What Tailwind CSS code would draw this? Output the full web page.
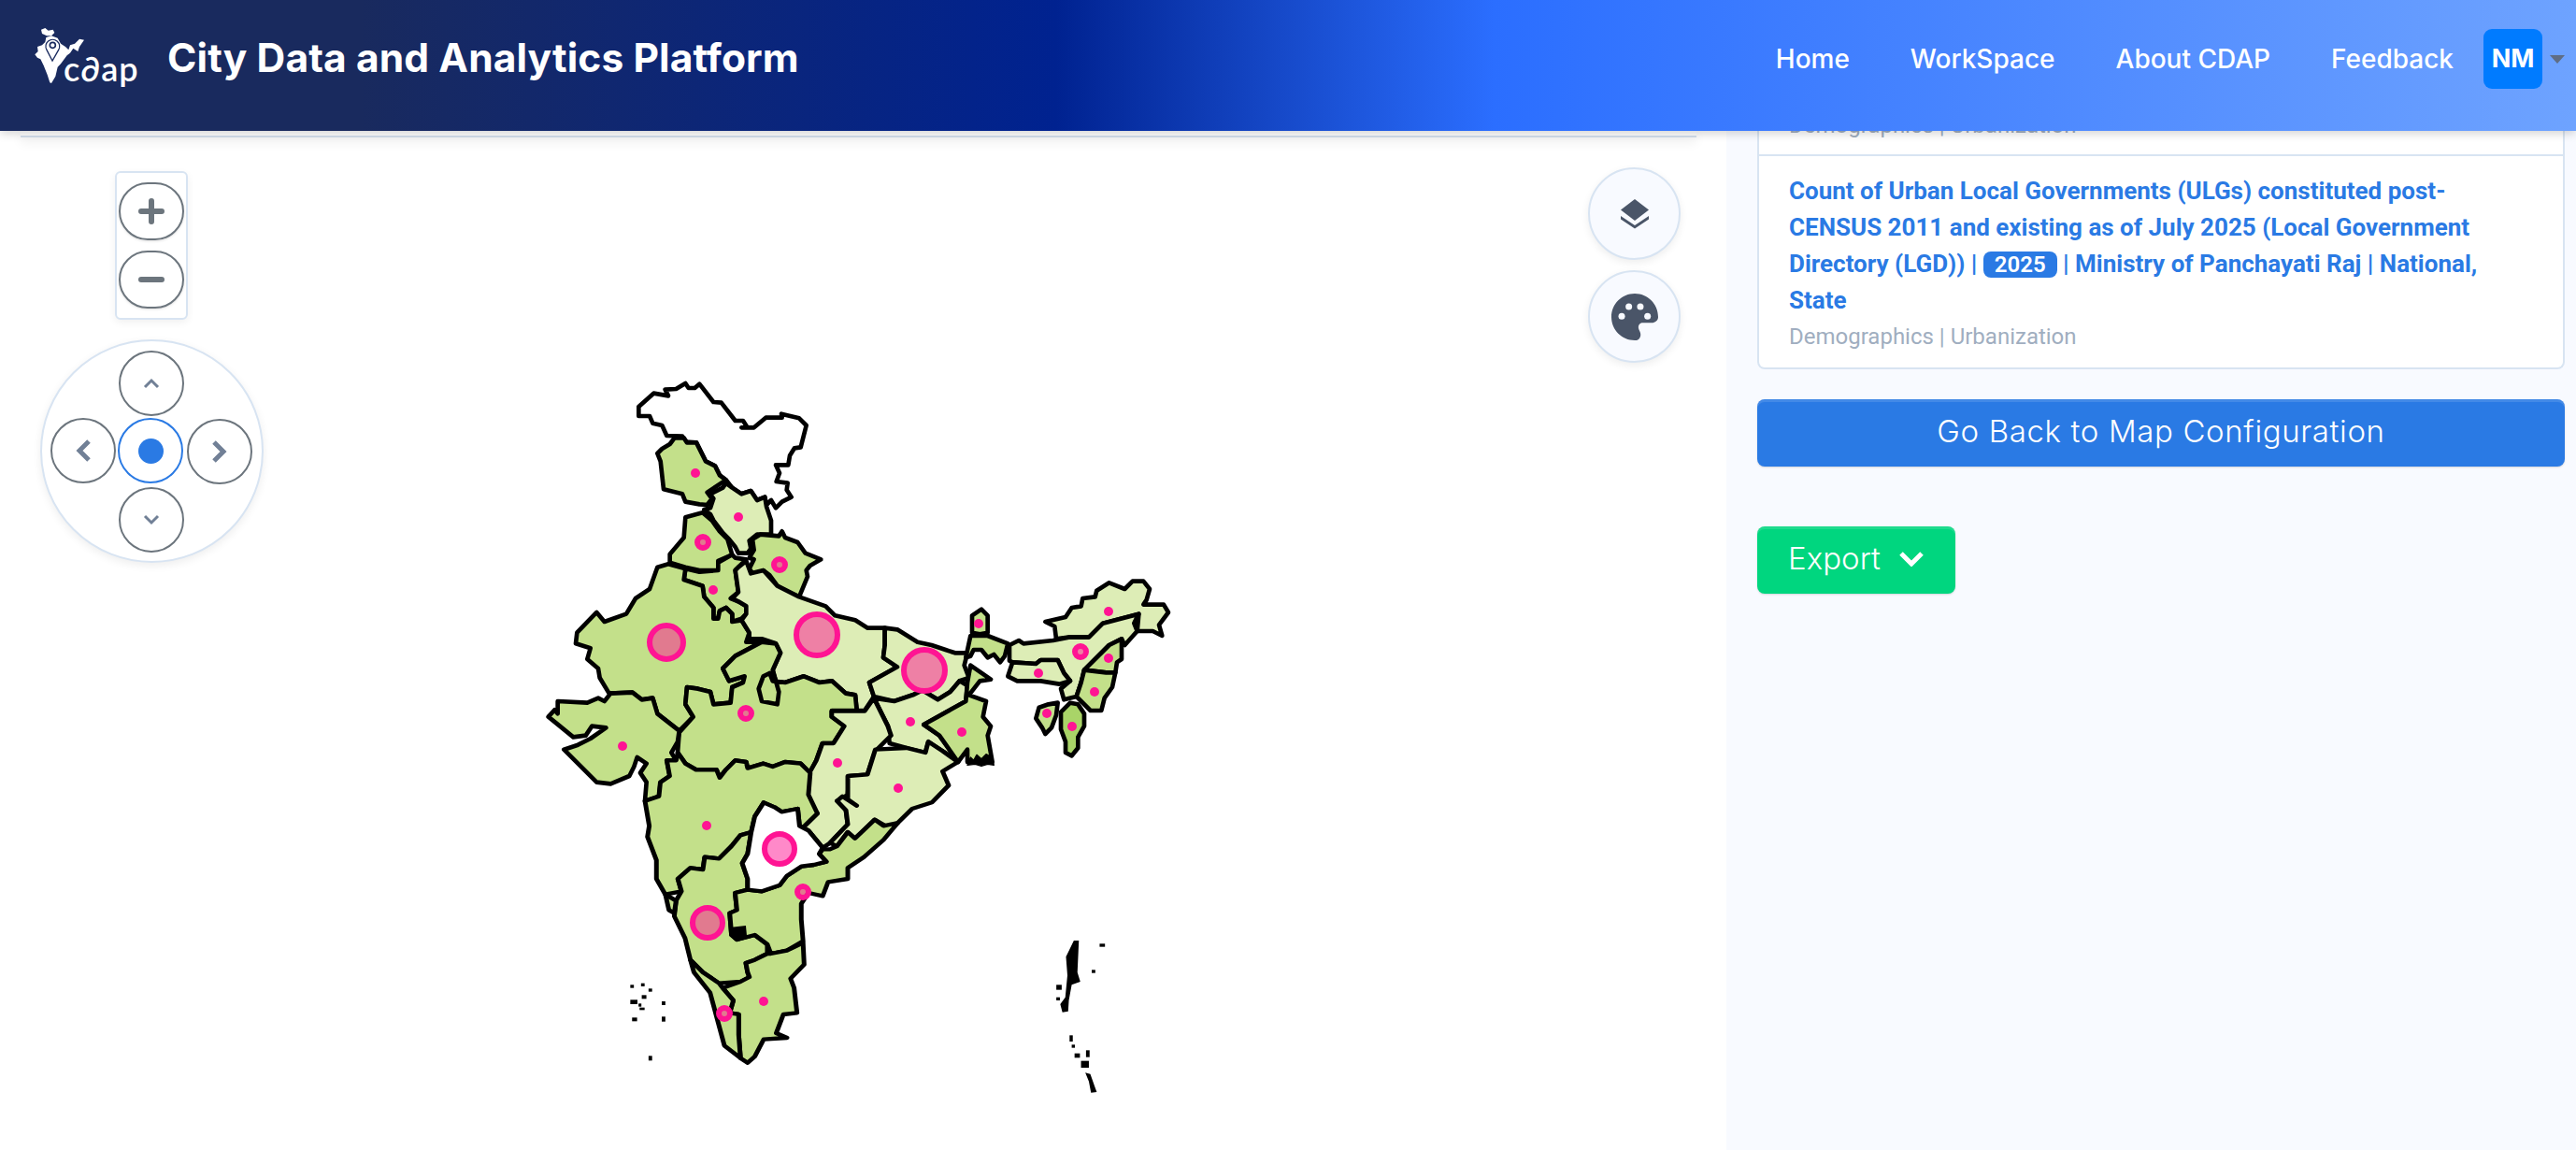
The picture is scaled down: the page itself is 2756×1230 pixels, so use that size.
<!DOCTYPE html>
<html lang="en">
<head>
  <meta charset="UTF-8" />
  <title>City Data and Analytics Platform</title>
  <script src="https://cdn.jsdelivr.net/npm/@tailwindcss/browser@4"></script>
</head>
<body class="h-screen overflow-hidden bg-white flex flex-col font-[Inter,sans-serif]">
  <!-- Top nav -->
  <header class="relative z-20 h-[140px] shrink-0 flex items-center pl-[20px] pr-[12px] text-white bg-[linear-gradient(90deg,#192a5e_0%,#192a5e_14%,#002290_41%,#2b6eff_58%,#6ea3ff_100%)] shadow-[0_2px_10px_rgba(0,0,0,0.2)]">
    <div class="relative w-[140px] h-[90px] -mt-[10px] mr-[19px] shrink-0">
      <svg class="absolute left-0 top-0 w-[140px] h-[90px]" viewBox="0 0 420 270" fill="#fff">
        <path d="M72 35L85 30 95 38 110 35 115 45 105 55 90 55 75 48z" />
        <path d="M88 60L105 55 125 62 135 80 150 90 160 100 165 85 180 80 195 65 210 68 195 90 190 105 175 95 165 110 155 118 135 145 125 155 118 185 105 207 100 205 92 180 80 150 70 130 60 125 52 115 62 105 60 90 75 85 85 75z" />
        <path d="M108 135L90 100A22 22 0 1 1 128 100z" fill="none" stroke="#192a5e" stroke-width="4" />
        <circle cx="109" cy="85" r="9" fill="#fff" stroke="#192a5e" stroke-width="5" />
      </svg>
      <span class="absolute left-[48px] top-[31px] font-[Lato] font-semibold text-[36px] leading-[44px] tracking-[1px]">c∂ap</span>
    </div>
    <h1 class="text-[42.5px] leading-[50px] font-bold tracking-[0.1px] -mt-[16px]">City Data and Analytics Platform</h1>
    <nav class="ml-auto flex items-center gap-[65px] text-[28px] font-medium -mt-[14px]">
      <a>Home</a>
      <a>WorkSpace</a>
      <a>About CDAP</a>
      <a>Feedback</a>
    </nav>
    <div class="ml-[32px] w-[63px] h-[64px] rounded-[9px] bg-[#007bff] flex items-center justify-center text-[27px] font-bold -mt-[14px]">NM</div>
    <span class="ml-[8px] w-0 h-0 border-x-[8px] border-x-transparent border-t-[9px] border-t-[#5f6d85] -mt-[14px]"></span>
  </header>

  <main class="flex-1 flex min-h-0">
    <!-- Map pane -->
    <section class="relative w-[1847px] shrink-0 bg-white">
      <div class="mx-[22px] w-[1793px] h-[7px] border-b-2 border-[#d3deeb] shadow-[0_5px_12px_rgba(0,0,0,0.08)]"></div>

      <svg class="absolute left-0 top-0 w-[1847px] h-[1090px]" viewBox="0 140 1847 1090">
        <g stroke="#000" stroke-linejoin="round">
          <!-- north and central states, traced on the 3x crop -->
          <g transform="translate(560 400) scale(.33333)" fill="#c3e08a" stroke-width="14">
            <polygon fill="#fff" points="370,135 370,105 418,62 465,70 455,50 490,48 520,30 530,45 550,45 565,32 610,90 635,92 680,150 705,150 718,170 700,172 740,172 778,140 830,140 828,128 885,142 908,165 890,235 870,238 855,262 850,292 810,292 822,318 812,345 848,350 845,372 860,395 830,410 810,430 795,405 780,420 775,395 750,405 730,375 700,385 670,365 650,340 630,325 615,295 585,280 555,220 520,218 510,200 460,198 445,165 415,158 405,135" />
            <polygon fill="#ddedb6" points="650,350 640,365 600,385 610,400 600,430 580,435 600,450 610,470 640,510 660,530 680,555 690,575 720,575 730,560 725,535 750,515 795,515 795,470 780,425 775,395 750,405 730,375 700,385 670,365" />
            <polygon points="430,255 445,240 470,225 485,205 515,205 525,220 555,220 585,280 615,295 630,325 650,340 590,380 605,400 590,420 565,418 520,410 510,385 450,370 440,280" />
            <polygon points="575,445 520,460 515,525 470,578 470,605 520,620 565,630 625,630 625,600 670,580 655,530 630,505 605,470" />
            <polygon points="735,530 760,515 820,520 830,505 840,525 880,540 905,575 955,595 920,615 908,630 912,650 885,715 850,700 815,680 790,645 770,630 740,645 725,625 740,595 725,590 740,565" />
            <polygon points="520,625 515,660 575,680 580,715 610,750 610,785 625,785 630,760 650,750 670,770 670,795 700,785 715,770 715,745 690,730 665,720 690,700 680,630 715,595 680,590 670,580 625,605 625,630 565,635" />
            <polygon points="465,610 430,620 405,690 360,720 330,770 260,795 235,765 172,830 168,865 215,880 205,915 240,945 245,975 275,1025 350,1022 380,1045 415,1040 430,1090 500,1145 545,1100 520,1060 525,1005 560,1010 600,1020 610,1060 665,1055 670,1005 705,990 710,970 660,985 640,945 680,905 765,860 715,860 725,830 700,790 670,795 670,770 650,750 630,760 625,785 610,785 610,750 580,715 575,680 515,660 520,625" />
            <polygon fill="#ddedb6" points="690,620 715,600 730,640 770,630 815,680 885,715 970,745 1000,775 1065,790 1105,815 1160,815 1160,870 1155,910 1200,940 1110,990 1125,1035 1095,1080 1070,1080 1065,1030 1035,1025 990,985 950,990 900,970 840,990 800,985 790,960 770,970 755,1010 765,1050 815,1060 820,1020 800,950 825,895 810,865 765,850 725,850 725,830 700,790 715,770 715,745 690,730 670,720 690,700 680,630" />
            <polygon fill="#ddedb6" points="1160,815 1200,820 1265,860 1310,870 1355,885 1385,895 1425,895 1415,935 1430,975 1400,985 1370,1020 1330,1045 1280,1015 1250,1030 1190,1050 1125,1035 1110,990 1200,940 1155,910 1160,870" />
            <polygon points="500,1150 495,1215 520,1250 555,1270 620,1270 630,1295 650,1270 680,1240 715,1245 720,1265 770,1250 800,1260 840,1245 890,1250 920,1280 940,1240 960,1185 995,1185 1030,1130 990,1100 990,1080 1070,1080 1065,1030 1035,1025 990,985 950,990 900,970 840,990 800,985 790,960 770,970 755,1010 765,1050 815,1060 820,1020 800,950 825,895 810,865 765,860 680,905 640,945 660,985 710,970 705,990 670,1005 665,1055 610,1060 600,1020 560,1010 525,1005 520,1060 545,1100" />
            <polygon points="110,1050 205,1055 240,1040 260,1050 280,1025 350,1022 380,1045 415,1040 430,1090 500,1145 495,1180 475,1215 490,1240 460,1240 470,1290 440,1310 435,1355 390,1370 395,1310 375,1280 395,1250 365,1230 355,1260 340,1290 280,1315 235,1310 130,1205 175,1190 215,1170 265,1135 220,1130 200,1160 160,1165 105,1120 80,1100 100,1078 110,1090" />
            <polygon fill="#ddedb6" points="1125,1040 1190,1050 1250,1030 1280,1015 1330,1045 1370,1020 1400,985 1425,1000 1420,1050 1375,1075 1330,1100 1285,1125 1335,1160 1395,1240 1345,1210 1300,1180 1290,1215 1230,1200 1175,1185 1170,1130" />
          </g>
          <!-- north east and West Bengal -->
          <g transform="translate(1000 580) scale(.33333)" fill="#c3e08a" stroke-width="14">
            <polygon points="115,395 180,440 145,445 110,490 165,510 155,560 180,590 170,620 185,705 105,705 105,665 75,705 15,620 -35,585 10,560 55,535 100,510 105,450" />
            <polygon fill="#000" stroke-width="4" points="105,715 115,690 125,700 135,682 150,695 165,680 185,690 190,715 170,712 150,718 130,712" />
            <polygon points="115,300 170,300 235,325 225,365 210,385 190,360 170,370 150,345 125,345 115,365 100,370" />
            <polygon points="120,235 150,215 170,235 170,290 145,295 120,290" />
            <polygon fill="#ddedb6" points="355,255 420,240 440,210 470,205 475,180 515,175 520,155 560,130 610,150 635,125 670,125 690,150 680,185 670,200 690,200 735,200 750,225 720,265 730,300 700,285 650,285 655,230 540,260 495,305 430,305 390,310 385,270" />
            <polygon fill="#ddedb6" points="240,330 270,315 285,325 380,315 430,305 495,305 540,260 655,230 640,260 650,285 610,330 600,310 560,330 480,410 470,450 455,495 415,505 405,470 435,445 415,420 395,378 340,378 325,390 250,385 240,380" />
            <polygon fill="#ddedb6" points="235,430 250,385 325,390 340,378 395,378 415,420 435,445 400,455 340,445 265,445" />
            <polygon points="600,310 600,375 585,385 580,418 550,418 480,410 560,330" />
            <polygon points="480,410 550,418 580,418 570,465 545,500 535,540 500,540 455,495 470,450" />
            <polygon fill="#a9d468" points="435,515 460,520 480,550 480,590 460,625 460,660 440,685 420,675 420,640 405,600 405,545" />
            <polygon points="395,515 390,555 375,595 355,615 345,595 325,565 335,530 365,520" />
          </g>
          <!-- south, this crop is 2.613x wide and 3x tall -->
          <g transform="translate(620 800) scale(.38270 .33333)" fill="#c3e08a" stroke-width="13">
            <polygon fill="#ddedb6" points="705,-118 797,-118 823,-160 862,-70 871,-40 827,10 805,85 755,90 750,150 720,170 745,200 750,245 700,305 680,320 640,265 625,255 665,210 640,185 635,150 640,85 662,40 679,-15 710,-15 740,-70 705,-100" />
            <polygon fill="#ddedb6" points="827,5 914,0 967,15 975,-20 1015,10 1058,45 1015,75 1032,120 985,175 930,195 890,240 870,260 825,230 790,270 770,290 750,270 720,315 700,305 750,245 745,200 720,170 735,155 775,185 750,165 750,90 805,85" />
            <polygon points="275,15 296,50 326,70 383,70 392,95 409,70 435,40 466,45 470,65 514,50 540,60 575,45 618,50 645,80 640,150 665,210 625,255 615,250 610,195 565,205 545,190 515,175 490,220 480,270 450,280 425,315 390,355 350,350 345,390 310,385 275,420 285,460 240,470 215,420 215,360 190,285 195,250 183,170 222,155 226,110 252,90 244,40 270,40" />
            <polygon points="275,420 310,385 345,390 350,350 390,355 425,315 450,280 480,270 470,340 455,370 470,420 470,455 435,465 440,520 420,530 425,600 440,615 490,600 525,630 525,660 490,680 465,690 470,720 475,735 450,750 390,755 345,720 310,680 295,610 265,540 270,490 285,460" />
            <polygon points="240,470 270,490 265,530 250,520" />
            <polygon points="470,455 510,460 560,440 580,410 620,380 655,375 690,365 670,340 680,325 700,325 720,315 750,270 770,290 825,230 850,250 890,240 850,295 795,350 750,385 750,420 695,430 680,475 640,465 620,500 620,550 625,620 580,650 535,660 525,630 490,600 440,615 425,600 420,530 440,520 435,465" />
            <polygon points="625,625 628,695 590,740 600,770 608,850 570,855 550,915 580,930 515,935 490,990 470,1010 450,995 445,920 445,855 420,850 430,810 400,770 450,750 475,735 470,720 465,690 490,680 525,660 535,660 580,650" />
            <polygon points="310,680 345,720 390,755 400,770 430,810 420,850 445,855 445,920 450,995 405,955 365,785 320,720" />
            <polygon fill="#fff" points="515,175 545,190 565,205 610,195 615,250 640,265 680,320 670,340 690,365 655,375 620,380 580,410 560,440 510,460 470,455 470,420 455,370 470,340 480,270 490,220" />
            <polygon fill="#000" stroke="none" points="425,575 465,570 468,605 445,618 425,600" />
          </g>
          <!-- islands -->
          <g transform="translate(620 800) scale(.38270 .33333)" fill="#000" stroke="none">
            <polygon points="1382,618 1396,618 1392,720 1400,750 1376,760 1368,810 1366,845 1350,848 1344,822 1358,800 1364,730 1360,670" />
            <rect x="1454" y="628" width="15" height="10" /><rect x="1432" y="712" width="10" height="10" />
            <rect x="1333" y="760" width="15" height="16" /><rect x="1333" y="800" width="10" height="10" />
            <rect x="1370" y="922" width="9" height="20" /><rect x="1376" y="952" width="9" height="10" />
            <rect x="1384" y="980" width="15" height="14" /><rect x="1416" y="970" width="10" height="22" />
            <rect x="1402" y="1004" width="22" height="22" /><polygon points="1414,1042 1428,1046 1440,1085 1446,1104 1430,1106 1424,1070" />
            <rect x="142" y="760" width="10" height="10" /><rect x="172" y="755" width="10" height="10" />
            <rect x="193" y="772" width="10" height="10" /><rect x="174" y="793" width="13" height="12" />
            <rect x="142" y="808" width="20" height="14" /><rect x="165" y="820" width="8" height="10" />
            <rect x="168" y="833" width="14" height="8" /><rect x="230" y="813" width="10" height="12" />
            <rect x="147" y="865" width="14" height="12" /><rect x="230" y="862" width="10" height="16" />
            <rect x="193" y="988" width="10" height="15" />
          </g>
        </g>
        <!-- bubbles -->
        <g fill="#ff1493" fill-opacity=".5" stroke="#ff1493" stroke-width="6">
          <circle cx="713" cy="687" r="18" /><circle cx="874" cy="679" r="22" /><circle cx="989" cy="717" r="22" />
          <circle cx="834" cy="908" r="16" /><circle cx="757" cy="987" r="16" />
          <circle cx="752" cy="580" r="6" /><circle cx="834" cy="604" r="6" /><circle cx="798" cy="763" r="6" />
          <circle cx="1156" cy="697" r="6" /><circle cx="859" cy="954" r="6" /><circle cx="775" cy="1084" r="6" />
        </g>
        <g fill="#ff1493">
          <circle cx="744" cy="506" r="5" /><circle cx="790" cy="553" r="5" /><circle cx="763" cy="631" r="5" />
          <circle cx="666" cy="798" r="5" /><circle cx="974" cy="772" r="5" /><circle cx="1029" cy="783" r="5" />
          <circle cx="896" cy="816" r="5" /><circle cx="961" cy="843" r="5" /><circle cx="1047" cy="667" r="5" />
          <circle cx="1186" cy="654" r="5" /><circle cx="1111" cy="720" r="5" /><circle cx="1186" cy="704" r="5" />
          <circle cx="1171" cy="740" r="5" /><circle cx="1120" cy="763" r="5" /><circle cx="1147" cy="777" r="5" />
          <circle cx="756" cy="883" r="5" /><circle cx="817" cy="1071" r="5" />
        </g>
      </svg>

      <!-- Zoom control -->
      <div class="absolute left-[123px] top-[43px] w-[78px] h-[159px] flex flex-col items-center gap-[11px] pt-[10px] bg-white border-2 border-[#d8e4f2] rounded-[6px] shadow-[0_3px_8px_rgba(0,0,0,0.06)]">
        <button class="w-[70px] h-[62px] shrink-0 rounded-full border-2 border-[#6c757d] flex items-center justify-center shadow-sm">
          <svg class="w-[28px] h-[28px]" viewBox="0 0 28 28"><path d="M14 3v22M3 14h22" stroke="#6c757d" stroke-width="6" stroke-linecap="round" /></svg>
        </button>
        <button class="w-[70px] h-[62px] shrink-0 rounded-full border-2 border-[#6c757d] flex items-center justify-center shadow-sm">
          <svg class="w-[28px] h-[28px]" viewBox="0 0 28 28"><path d="M3 14h22" stroke="#6c757d" stroke-width="6" stroke-linecap="round" /></svg>
        </button>
      </div>

      <!-- Pan control -->
      <div class="absolute left-[43px] top-[223px] w-[239px] h-[239px] rounded-full bg-white border-2 border-[#d8e4f2] pl-[9px] pt-[10px] shadow-[0_3px_10px_rgba(0,0,0,0.07)] grid grid-cols-[70px_70px_70px] grid-rows-[70px_70px_70px] gap-[3px]">
        <button class="col-start-2 w-[70px] h-[70px] rounded-full border-2 border-[#6c757d] flex items-center justify-center">
          <svg class="w-[18px] h-[12px]" viewBox="0 0 18 12" fill="none"><path d="M2 10l7-7 7 7" stroke="#718096" stroke-width="3" /></svg>
        </button>
        <button class="col-start-1 row-start-2 w-[70px] h-[70px] -mt-px rounded-full border-2 border-[#6c757d] flex items-center justify-center">
          <svg class="w-[16px] h-[24px]" viewBox="0 0 16 24" fill="none"><path d="M14 2L4 12l10 10" stroke="#718096" stroke-width="5" /></svg>
        </button>
        <button class="col-start-2 row-start-2 w-[70px] h-[70px] -ml-px -mt-px rounded-full border-2 border-[#2a7ae4] flex items-center justify-center">
          <span class="w-[27px] h-[27px] rounded-full bg-[#2a7ae4]"></span>
        </button>
        <button class="col-start-3 row-start-2 w-[70px] h-[70px] rounded-full border-2 border-[#6c757d] flex items-center justify-center">
          <svg class="w-[16px] h-[24px]" viewBox="0 0 16 24" fill="none"><path d="M2 2l10 10L2 22" stroke="#718096" stroke-width="5" /></svg>
        </button>
        <button class="col-start-2 row-start-3 w-[70px] h-[70px] rounded-full border-2 border-[#6c757d] flex items-center justify-center">
          <svg class="w-[18px] h-[12px]" viewBox="0 0 18 12" fill="none"><path d="M2 2l7 7 7-7" stroke="#718096" stroke-width="3" /></svg>
        </button>
      </div>

      <!-- Layer and colour buttons -->
      <div class="absolute left-[1699px] top-[39px] flex flex-col gap-[11px]">
        <button class="w-[99px] h-[99px] rounded-full bg-[#f8faff] border-2 border-[#d8e4f2] flex items-center justify-center shadow-[0_3px_8px_rgba(0,0,0,0.07)]">
          <svg class="w-[30px] h-[32px]" viewBox="0 0 30 32" fill="#4a5568"><path d="M15 0L30 11.500 15 23 0 11.500z" /><path d="M0 18l15 10 15-10v3.500l-15 10-15-10z" /></svg>
        </button>
        <button class="w-[99px] h-[99px] rounded-full bg-[#f8faff] border-2 border-[#d8e4f2] flex items-center justify-center shadow-[0_3px_8px_rgba(0,0,0,0.07)]">
          <svg class="w-[50px] h-[50px]" viewBox="0 0 512 512">
            <path fill="#4a5568" d="M512 256c0 .9 0 1.800 0 2.700c-.4 36.500-33.600 61.300-70.100 61.300H344c-26.500 0-48 21.500-48 48c0 3.400 .4 6.700 1 9.900c2.100 10.200 6.500 20 10.800 29.900c6.100 13.800 12.100 27.500 12.100 42c0 31.800-21.600 60.700-53.400 62c-3.500 .1-7 .2-10.600 .2C114.600 512 0 397.400 0 256S114.600 0 256 0S512 114.600 512 256z" />
            <g fill="#f8faff"><circle cx="113" cy="249" r="36" /><circle cx="191" cy="143" r="36" /><circle cx="317" cy="143" r="36" /><circle cx="396" cy="249" r="36" /></g>
          </svg>
        </button>
      </div>
    </section>

    <!-- Right panel -->
    <aside class="flex-1 min-w-0 overflow-hidden bg-[#f8faff] pl-[33px] pr-[12px] font-[Roboto,sans-serif]">
      <div class="bg-white border-2 border-t-0 border-[#d8e4f2] rounded-b-[8px]">
        <div class="h-[27px] overflow-hidden px-[32px] border-b-2 border-[#d8e4f2]">
          <p class="-mt-[25px] text-[24px] leading-[39px] text-[#a0aec0]">Demographics | Urbanization</p>
        </div>
        <div class="px-[32px] pt-[18px] pb-[14px]">
          <p class="text-[26px] leading-[39px] font-bold text-[#2a7ae4]">Count of Urban Local Governments (ULGs) constituted post-CENSUS 2011 and existing as of July 2025 (Local Government Directory (LGD)) | <span class="inline-block leading-[28px] px-[12px] rounded-[8px] bg-[#2a7ae4] text-white text-[24px] font-semibold">2025</span> | Ministry of Panchayati Raj | National, State</p>
          <p class="text-[24px] leading-[38px] text-[#a0aec0]">Demographics | Urbanization</p>
        </div>
      </div>
      <button class="mt-[32px] w-full h-[72px] pb-[2px] rounded-[8px] bg-[#2a7ae4] text-white text-[33px] tracking-[0.64px] font-[Inter] font-light shadow-[inset_0_3px_0_rgba(255,255,255,0.12),0_1px_2px_rgba(0,0,0,0.15)]">Go Back to Map Configuration</button>
      <button class="mt-[64px] w-[212px] h-[72px] pb-[2px] rounded-[8px] bg-[#00d67f] text-white text-[33px] font-[Inter] font-light flex items-center justify-center gap-[19px] shadow-[inset_0_3px_0_rgba(255,255,255,0.12),0_1px_2px_rgba(0,0,0,0.15)]">
        Export
        <svg class="w-[28px] h-[16px]" viewBox="0 0 28 16" fill="none"><path d="M3 2l11 11L25 2" stroke="#fff" stroke-width="5" /></svg>
      </button>
    </aside>
  </main>
</body>
</html>
